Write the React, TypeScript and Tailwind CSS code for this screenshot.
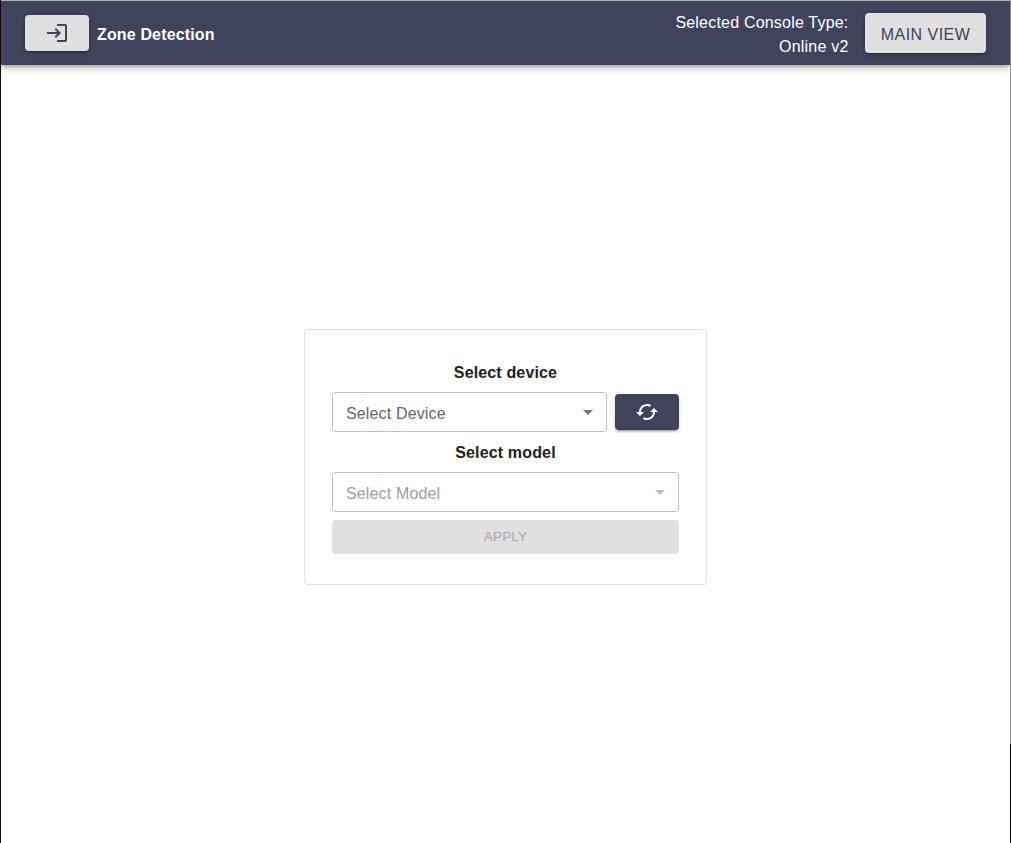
import type { ReactNode } from "react";

const raised =
  "shadow-[0px_3px_1px_-2px_rgba(0,0,0,0.2),0px_2px_2px_0px_rgba(0,0,0,0.14),0px_1px_5px_0px_rgba(0,0,0,0.12)]";

function Icon({ d, className = "" }: { d: string; className?: string }) {
  return (
    <svg viewBox="0 0 24 24" fill="currentColor" className={`size-6 shrink-0 ${className}`} aria-hidden="true">
      <path d={d} />
    </svg>
  );
}

const loginPath =
  "M11 7 9.6 8.4l2.6 2.6H2v2h10.2l-2.6 2.6L11 17l5-5-5-5zm9 12h-8v2h8c1.1 0 2-.9 2-2V5c0-1.1-.9-2-2-2h-8v2h8v14z";
const cachedPath =
  "m19 8-4 4h3c0 3.31-2.69 6-6 6-1.01 0-1.97-.25-2.8-.7l-1.46 1.46C8.97 19.54 10.43 20 12 20c4.42 0 8-3.58 8-8h3l-4-4zM6 12c0-3.31 2.69-6 6-6 1.01 0 1.97.25 2.8.7l1.46-1.46C15.03 4.46 13.57 4 12 4c-4.42 0-8 3.58-8 8H1l4 4 4-4H6z";

function Select({ children, disabled = false }: { children: ReactNode; disabled?: boolean }) {
  return (
    <button
      type="button"
      disabled={disabled}
      className={`flex h-10 min-w-0 flex-1 items-center justify-between rounded border border-[#bdbdbd] pr-[6px] pl-[13px] tracking-[0.15px] ${
        disabled ? "text-[#9e9e9e]" : "text-[#666666]"
      }`}
    >
      <span className="pt-[3px]">{children}</span>
      <Icon d="M7 10l5 5 5-5z" className={disabled ? "text-[#bdbdbd]" : "text-[#757575]"} />
    </button>
  );
}

export default function App() {
  return (
    <div className="flex h-[843px] w-[1011px] bg-white font-['Liberation_Sans',Arial,sans-serif] text-base leading-6 text-[#212121]">
      <div className="w-px bg-[#140c14]" />
      <div className="flex min-w-0 flex-1 flex-col border-t border-[#bdbdbd]">
        <header className="flex h-16 items-center bg-[#3f435b] px-6 text-white shadow-[0px_2px_4px_-1px_rgba(0,0,0,0.2),0px_4px_5px_0px_rgba(0,0,0,0.14),0px_1px_10px_0px_rgba(0,0,0,0.12)]">
          <button type="button" className={`flex h-9 w-16 items-center justify-center rounded bg-[#e0e0e0] text-[#3f435b] ${raised}`}>
            <Icon d={loginPath} />
          </button>
          <h1 className="ml-2 pt-1 font-bold tracking-[0.15px]">Zone Detection</h1>
          <p className="ml-auto w-[180px] pt-1 text-right tracking-[0.2px]">
            Selected Console Type:
            <br />
            Online v2
          </p>
          <button type="button" className={`ml-[16.5px] flex h-10 w-[121px] items-center justify-center rounded bg-[#e0e0e0] pt-1 tracking-[0.46px] text-[#3f435b] ${raised}`}>
            MAIN VIEW
          </button>
        </header>
        <main className="flex flex-1 justify-center pt-[264px]">
          <section className="flex h-64 w-[403px] flex-col rounded border border-[#e0e0e0] px-[27px] pt-[31px]">
            <h2 className="h-[31px] text-center font-bold tracking-[0.15px]">Select device</h2>
            <div className="flex items-center gap-2">
              <Select>Select Device</Select>
              <button type="button" className={`flex h-9 w-16 items-center justify-center rounded bg-[#3f435b] text-white ${raised}`}>
                <Icon d={cachedPath} />
              </button>
            </div>
            <h2 className="mt-[9px] h-[31px] text-center font-bold tracking-[0.15px]">Select model</h2>
            <div className="flex">
              <Select disabled>Select Model</Select>
            </div>
            <button type="button" disabled className="mt-2 h-[34px] rounded bg-[#e0e0e0] text-[13.5px] tracking-[0.15px] text-[#a6a6a6]">
              APPLY
            </button>
          </section>
        </main>
      </div>
      <div className="flex w-px flex-col">
        <div className="h-[744px] bg-[#8c8c8c]" />
        <div className="flex-1 bg-black" />
      </div>
    </div>
  );
}
